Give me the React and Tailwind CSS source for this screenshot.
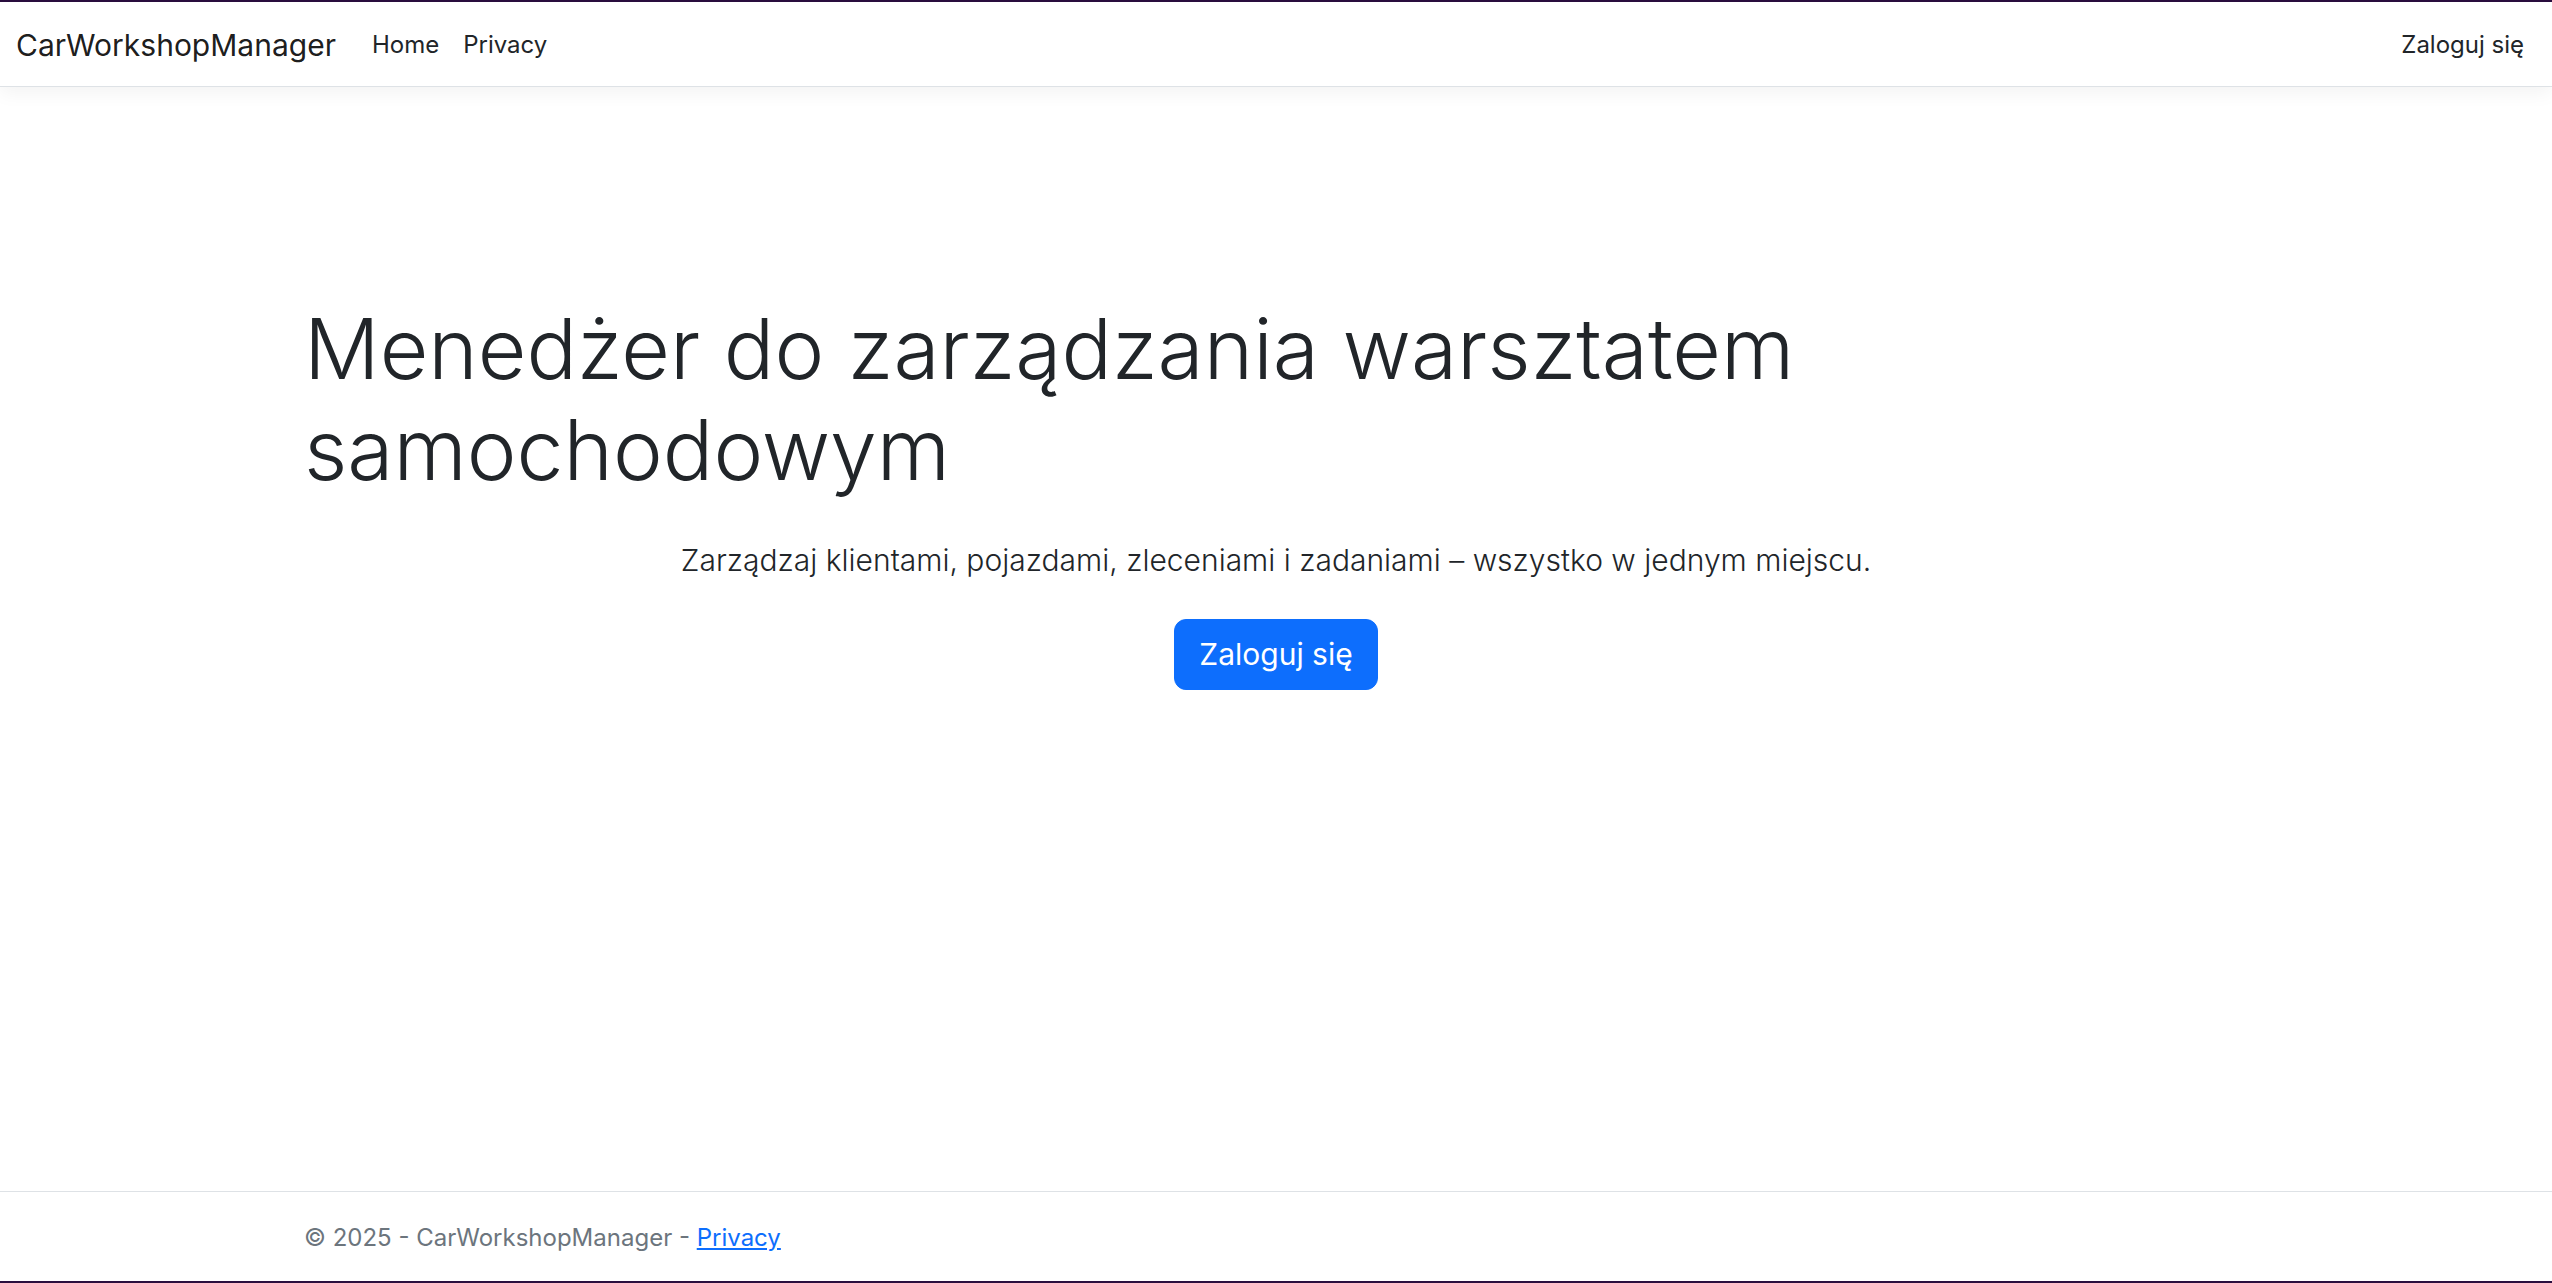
const NAV_LINKS = ["Home", "Privacy"];

const Navbar = () => (
  <header className="relative z-10 border-b border-[#dee2e6] bg-white shadow-[0_6px_18px_rgba(0,0,0,0.05)]">
    <nav className="flex h-[84px] items-center px-[16px] pt-[2px]">
      <a className="mr-[24px] text-[30px] leading-[45px] text-[rgba(0,0,0,0.9)]" href="#">
        CarWorkshopManager
      </a>
      <ul className="flex flex-1 items-center">
        {NAV_LINKS.map(link => (
          <li key={link}>
            <a className="block px-[12px] py-[12px] text-[24px] leading-[36px] text-[#212529]" href="#">
              {link}
            </a>
          </li>
        ))}
      </ul>
      <a className="block px-[12px] py-[12px] text-[24px] leading-[36px] text-[#212529]" href="#">
        Zaloguj się
      </a>
    </nav>
  </header>
);

const Hero = () => (
  <main className="flex-1">
    <div className="mx-auto w-[1980px] px-[18px] pt-[212px]">
      <h1 className="mb-[12px] text-[84px] font-light leading-[1.2] text-[#212529]">
        Menedżer do zarządzania warsztatem samochodowym
      </h1>
      <div className="text-center">
        <p className="mt-[37px] text-[30px] font-light leading-[45px] text-[#212529]">
          Zarządzaj klientami, pojazdami, zleceniami i zadaniami – wszystko w jednym miejscu.
        </p>
        <a
          className="mt-[36px] inline-block rounded-[12px] border border-[#0d6efd] bg-[#0d6efd] px-[24px] py-[12px] text-[30px] leading-[45px] text-white"
          href="#"
        >
          Zaloguj się
        </a>
      </div>
    </div>
  </main>
);

const Footer = () => (
  <footer className="h-[90px] border-t border-[#dee2e6] pt-[3px] text-[24px] leading-[86px] text-[#6c757d]">
    <div className="mx-auto w-[1980px] whitespace-nowrap px-[18px]">
      © 2025 - CarWorkshopManager -{" "}
      <a className="text-[#0d6efd] underline" href="#">
        Privacy
      </a>
    </div>
  </footer>
);

export default function App() {
  return (
    <div className="flex h-[1283px] flex-col overflow-hidden bg-white font-['Inter',sans-serif]">
      <div className="h-[2px] bg-[#2a0e3e]" />
      <Navbar />
      <Hero />
      <Footer />
      <div className="h-[2px] bg-[#2a0e3e]" />
    </div>
  );
}
